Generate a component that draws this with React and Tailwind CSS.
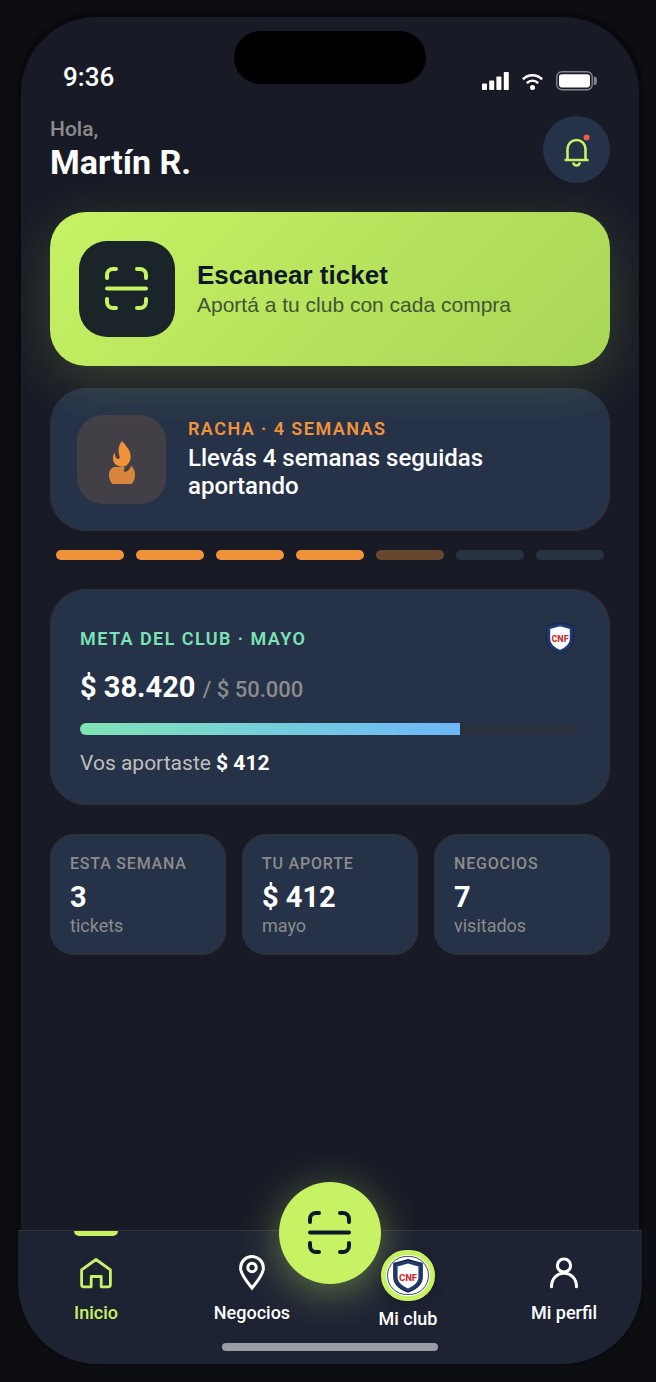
const streak = ["done", "done", "done", "done", "current", "pending", "pending"];

const segmentStyles = {
  done: "bg-[#f1933b]",
  current: "bg-[#67482e]",
  pending: "bg-[#293240]",
};

const stats = [
  { label: "Esta semana", value: "3", note: "tickets" },
  { label: "Tu aporte", value: "$ 412", note: "mayo" },
  { label: "Negocios", value: "7", note: "visitados" },
];

const goal = { raised: 38420, target: 50000 };

const ScanIcon = () => (
  <svg width="44" height="44" viewBox="0 0 44 44" fill="none" stroke="currentColor" strokeWidth="4" strokeLinecap="round" strokeLinejoin="round" aria-hidden="true">
    <path d="M2 11V8a6 6 0 0 1 6-6h3M32 2h3a6 6 0 0 1 6 6v3M41 32v3a6 6 0 0 1-6 6h-3M11 41H8a6 6 0 0 1-6-6v-3M2 21.5h39" />
  </svg>
);

const BellIcon = () => (
  <svg width="28" height="34" viewBox="0 0 28 34" fill="none" stroke="#c6f264" strokeWidth="2.6" aria-hidden="true">
    <path d="M4.500 26.500V16a9 9 0 0 1 18 0v10.500M1.500 27h24" />
    <path d="M10.200 29.500c.4 2 1.700 3 3.300 3s2.900-1 3.300-3" />
    <circle cx="23.500" cy="4.500" r="3" fill="#ee5a4c" stroke="none" />
  </svg>
);

const FlameIcon = () => (
  <svg width="26" height="43" viewBox="0 0 26 43" fill="#f1933b" aria-hidden="true">
    <path d="M13 0C17 5 21.700 9 21.700 15.500C21.700 21.500 18 25.700 13 25.700C8 25.700 4 22.500 4 17.500C4 15 4.500 13 5.800 11.700C6 15 7 17.800 9 18C10.800 18 11 17 10.500 15.500C9 10 9 5 13 0Z" />
    <path opacity=".85" d="M5 26H15.500C16.200 27.500 13.500 29.500 16 31C18.500 30.500 20.500 29 22 24.800C24.800 27 26 30 26 34C26 38 24.500 41 22.500 43H3.500C1.500 41 0 38 0 34.500C0 30 1.500 27.500 5 26Z" />
  </svg>
);

const Shield = ({ className }) => (
  <svg className={className} viewBox="0 0 28 32" role="img" aria-label="Escudo CNF">
    <path d="M14 .6 27.400 4.200V17C27.400 24.500 20.500 29 14 31.400C7.500 29 .6 24.500 .6 17V4.200Z" fill="#203a70" stroke="#15233f" />
    <path d="M14 4.200 23.800 7V17C23.800 22 19 25.800 14 27.800C9 25.800 4.200 22 4.200 17V7Z" fill="#fff" />
    <text x="14" y="20.400" textAnchor="middle" fontSize="9" fontWeight="800" fill="#c22f35">CNF</text>
  </svg>
);

const HomeIcon = () => (
  <svg width="36" height="36" viewBox="0 0 36 36" fill="none" stroke="currentColor" strokeWidth="2.8" strokeLinejoin="round" aria-hidden="true">
    <path d="M18 4.500 32.400 14.800V30a1.800 1.800 0 0 1-1.800 1.800H23.200V21.500H13.200V31.800H5.400A1.800 1.800 0 0 1 3.600 30V14.800Z" />
  </svg>
);

const PinIcon = () => (
  <svg width="36" height="36" viewBox="0 0 36 36" fill="none" stroke="currentColor" strokeWidth="3" aria-hidden="true">
    <path d="M18 33C14.500 28.500 6.600 20 6.600 12.900a11.400 11.400 0 0 1 22.800 0C29.400 20 21.500 28.500 18 33Z" />
    <circle cx="18" cy="12.500" r="4.200" />
  </svg>
);

const UserIcon = () => (
  <svg width="36" height="36" viewBox="0 0 36 36" fill="none" stroke="currentColor" strokeWidth="3" strokeLinecap="round" aria-hidden="true">
    <circle cx="18" cy="10.500" r="6.600" />
    <path d="M5.500 31.800C5.500 24 10.800 18.200 18 18.200S30.500 24 30.500 31.800" />
  </svg>
);

const StatusBar = () => (
  <div className="grid grid-cols-[1fr_auto_1fr] items-end h-[60px] px-[42px]">
    <span className="text-[26px] leading-7 font-medium">9:36</span>
    <div className="self-start w-48 h-[53px] rounded-full bg-black"></div>
    <div className="flex items-center justify-end gap-[13px]">
      <svg width="27" height="20" viewBox="0 0 27 20" fill="#fff" aria-hidden="true">
        <rect x="0" y="12.500" width="5" height="6.500" rx=".8" />
        <rect x="7.200" y="9.500" width="5" height="9.500" rx=".8" />
        <rect x="14.400" y="5.500" width="5" height="13.500" rx=".8" />
        <rect x="21.800" y="1" width="5" height="18" rx=".8" />
      </svg>
      <svg width="21" height="20" viewBox="0 0 21 20" fill="none" stroke="#fff" strokeWidth="2.600" aria-hidden="true">
        <path d="M.9 8.200C6.500 2.900 14.500 2.900 20.100 8.200M4.800 12.100C8.200 9 12.800 9 16.200 12.100" />
        <circle cx="10.500" cy="16.400" r="2.500" fill="#fff" stroke="none" />
      </svg>
      <svg width="41" height="20" viewBox="0 0 41 20" aria-hidden="true">
        <rect x=".8" y=".8" width="35.400" height="18" rx="5" fill="none" stroke="#85878d" strokeWidth="1.400" />
        <rect x="3" y="3.200" width="31" height="13.200" rx="2.800" fill="#fff" />
        <path d="M37.800 5.800h1.200a1.800 1.800 0 0 1 1.800 1.800v4.600a1.800 1.800 0 0 1-1.800 1.800h-1.200Z" fill="#85878d" />
      </svg>
    </div>
  </div>
);

const TabBar = () => (
  <nav className="relative bg-[#1e2333] border-t border-[#333333] rounded-b-[80px] pb-[13px]">
    <button
      type="button"
      aria-label="Escanear ticket"
      className="absolute left-1/2 -top-[49px] -translate-x-1/2 size-[102px] rounded-full bg-[#c6f264] text-[#0f172a] flex items-center justify-center shadow-[0_8px_40px_rgba(198,242,100,0.4)]"
    >
      <ScanIcon />
    </button>
    <div className="grid grid-cols-4 h-28 text-[18px] leading-[22px] font-medium">
      <a href="#inicio" aria-current="page" className="flex flex-col items-center text-[#c6f264]">
        <span className="w-11 h-[5px] mb-[19px] rounded-b-md bg-[#c6f264]"></span>
        <HomeIcon />
        <span className="mt-[11px]">Inicio</span>
      </a>
      <a href="#negocios" className="flex flex-col items-center pt-6 gap-[11px]">
        <PinIcon />
        Negocios
      </a>
      <a href="#club" className="relative flex flex-col items-center pt-[19px] gap-[7px]">
        <span className="w-[54px] h-[51px] p-px flex border-[5px] border-[#c6f264] rounded-full bg-white shadow-[0_4px_12px_rgba(0,0,0,0.2)]">
          <span className="flex-1 flex items-center justify-center rounded-full border border-[#39465f] bg-white">
            <Shield className="w-[30px] h-[34px]" />
          </span>
        </span>
        Mi club
      </a>
      <a href="#perfil" className="flex flex-col items-center pt-6 gap-[11px]">
        <UserIcon />
        Mi perfil
      </a>
    </div>
    <div className="w-54 h-2 mx-auto rounded-full bg-[#9a9ca4]"></div>
  </nav>
);

export default function App() {
  const percent = Math.floor((goal.raised / goal.target) * 100);

  return (
    <div className="min-h-screen flex flex-col pl-[18px] pr-3.5 pt-[13px] pb-[18px] bg-[#0d0e12] font-[Roboto,sans-serif] text-white">
      <div className="flex-1 flex flex-col rounded-[80px] bg-[#090a0f] shadow-[0_0_3px_rgba(0,0,0,0.8)]">
        <main className="flex-1 mx-[3px] mt-1 pt-3.5 pb-20 rounded-t-[76px] bg-[#181b26] overflow-hidden">
          <StatusBar />

          <div className="px-[29px] pt-[25px]">
            {/* Greeting */}
            <header className="flex items-center justify-between">
              <div>
                <p className="text-[21px] leading-6 font-medium text-[#8c8c8c]">Hola,</p>
                <h1 className="text-[34px] leading-[42px] font-bold">Martín R.</h1>
              </div>
              <button type="button" aria-label="Notificaciones" className="size-[67px] rounded-full bg-[#263248] flex items-center justify-center">
                <BellIcon />
              </button>
            </header>

            {/* Scan call to action */}
            <button
              type="button"
              className="relative w-full mt-[29px] p-[29px] flex items-center gap-[22px] text-left rounded-[36px] bg-linear-135 from-[#c6f264] to-[#a8d656] shadow-[0_14px_54px_rgba(198,242,100,0.18)] font-['Liberation_Sans',sans-serif]"
            >
              <span className="size-24 rounded-[28px] bg-[#1b2429] text-[#c6f264] flex items-center justify-center">
                <ScanIcon />
              </span>
              <span className="pt-0.5">
                <span className="block text-[26px] leading-[30px] font-bold text-[#0f172a]">Escanear ticket</span>
                <span className="block text-[21px] leading-[30px] text-[#435435]">Aportá a tu club con cada compra</span>
              </span>
            </button>

            {/* Weekly streak */}
            <section className="mt-[22px] p-[26px] flex items-center gap-[22px] rounded-[36px] border border-[#333333] bg-[#263248]">
              <div className="shrink-0 size-[89px] pb-5 rounded-[26px] bg-[#433f46] flex items-end justify-center">
                <FlameIcon />
              </div>
              <div>
                <p className="text-[18px] leading-5 font-semibold tracking-[0.08em] uppercase text-[#f1933b]">Racha · 4 semanas</p>
                <h2 className="mt-[5px] text-[24px] leading-7 font-medium">Llevás 4 semanas seguidas aportando</h2>
              </div>
            </section>
            <div className="mt-[19px] px-1.5 flex gap-3">
              {streak.map((state, i) => (
                <span key={i} className={`flex-1 h-2.5 rounded-full ${segmentStyles[state]}`}></span>
              ))}
            </div>

            {/* Club goal */}
            <section className="mt-[29px] px-[29px] pt-8 pb-[27px] rounded-[36px] border border-[#333333] bg-[#263248]">
              <div className="flex items-center justify-between pr-1.5">
                <h2 className="text-[18px] font-semibold tracking-[0.08em] uppercase text-[#7be3b5]">Meta del club · Mayo</h2>
                <Shield className="w-7 h-8" />
              </div>
              <p className="mt-[13px] text-[29px] leading-10 font-bold">
                $ 38.420 <span className="text-[22px] font-medium text-[#8c8c8c]">/ $ 50.000</span>
              </p>
              <div className="mt-[13px] h-3 rounded-full overflow-hidden bg-[#29323e]">
                <div className="h-full bg-linear-to-r from-[#80e4b4] to-[#6eb6fb]" style={{ width: `${percent}%` }}></div>
              </div>
              <p className="mt-3.5 text-[21px] leading-7 text-[#bfbfbf]">
                Vos aportaste <strong className="font-bold text-white">$ 412</strong>
              </p>
            </section>

            {/* Stats */}
            <section className="mt-[29px] grid grid-cols-3 gap-4">
              {stats.map((stat) => (
                <div key={stat.label} className="px-[19px] pt-[17px] pb-[18px] rounded-3xl border border-[#333333] bg-[#263248]">
                  <p className="text-[16px] leading-6 font-medium tracking-wider uppercase text-[#8c8c8c]">{stat.label}</p>
                  <p className="mt-[3px] text-[29px] leading-9 font-bold">{stat.value}</p>
                  <p className="text-[18px] leading-[21px] text-[#8c8c8c]">{stat.note}</p>
                </div>
              ))}
            </section>
          </div>
        </main>
        <TabBar />
      </div>
    </div>
  );
}
